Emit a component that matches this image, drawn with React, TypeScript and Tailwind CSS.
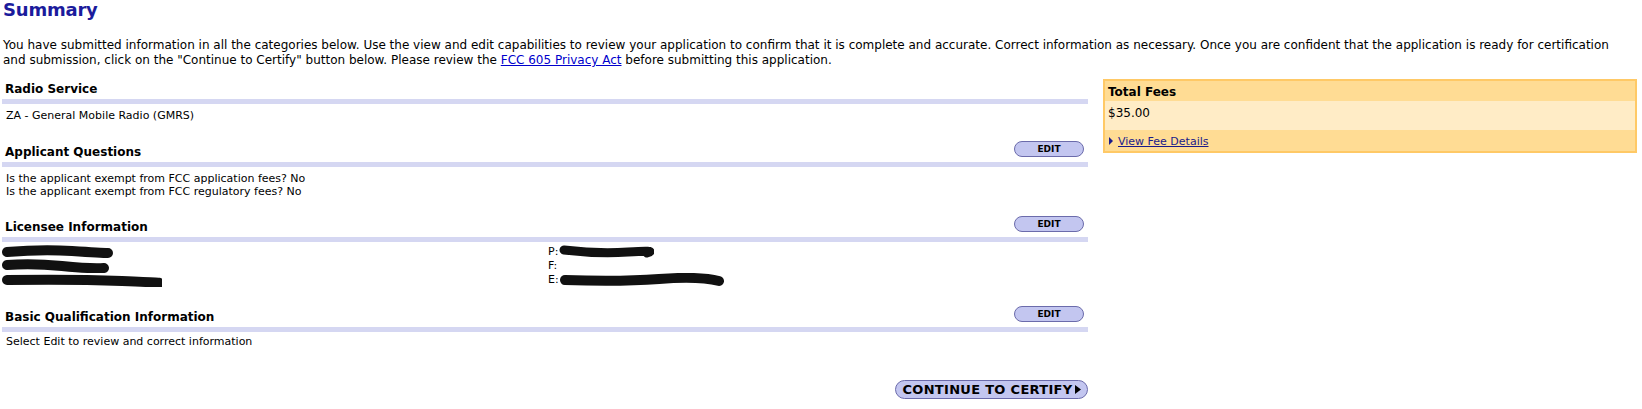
import React from "react";

const Scribble = ({ w, h, d, sw = 9 }: { w: number; h: number; d: string; sw?: number }) => (
  <svg width={w} height={h} viewBox={`0 0 ${w} ${h}`} className="block shrink-0">
    <path d={d} fill="none" stroke="#111" strokeWidth={sw} strokeLinecap="round" strokeLinejoin="round" />
  </svg>
);

const EditBtn = () => (
  <button className="mb-[5px] mr-[4px] flex h-[16px] w-[70px] items-center justify-center rounded-full border border-[#6b6bab] bg-[#c3c6f0] text-[9px] font-bold leading-none text-black">
    EDIT
  </button>
);

const Section = ({
  title,
  edit,
  children,
  className = "",
}: {
  title: string;
  edit?: boolean;
  children: React.ReactNode;
  className?: string;
}) => (
  <div className={className}>
    <div className="flex items-end justify-between">
      <div className="mb-[2px] pl-[3px] text-[12px] font-bold leading-[16px] text-black">{title}</div>
      {edit && <EditBtn />}
    </div>
    <div className="h-[5px] bg-[#d5d7f2]" />
    {children}
  </div>
);

export default function App() {
  return (
    <div className="h-[409px] w-[1642px] overflow-hidden bg-white pl-[2px] font-['DejaVu_Sans',Verdana,sans-serif] text-black">
      <h1 className="pl-[1px] text-[18px] font-bold leading-[20px] tracking-[-0.2px] text-[#1b1b9c]">Summary</h1>
      <div className="mt-[18px] pl-[1px] text-[12px] leading-[15px]">
        <span className="block whitespace-nowrap">
          You have submitted information in all the categories below. Use the view and edit capabilities to review your
          application to confirm that it is complete and accurate. Correct information as necessary. Once you are
          confident that the application is ready for certification
        </span>
        <span className="block whitespace-nowrap">
          and submission, click on the "Continue to Certify" button below. Please review the{" "}
          <a href="#" className="text-[#0000cc] underline">
            FCC 605 Privacy Act
          </a>{" "}
          before submitting this application.
        </span>
      </div>

      <div className="mt-[12px] flex items-start">
        <div className="w-[1086px] pt-[1px]">
          <Section title="Radio Service">
            <div className="pl-[4px] pt-[4px] text-[11px] leading-[15px]">ZA - General Mobile Radio (GMRS)</div>
          </Section>

          <Section title="Applicant Questions" edit className="mt-[18px]">
            <div className="pl-[4px] pt-[5px] text-[11px] leading-[13px]">
              <div>Is the applicant exempt from FCC application fees? No</div>
              <div>Is the applicant exempt from FCC regulatory fees? No</div>
            </div>
          </Section>

          <Section title="Licensee Information" edit className="mt-[18px]">
            <div className="flex pt-[3px] text-[11px] leading-[14px]">
              <div className="w-[546px]">
                <div className="flex h-[14px] items-center">
                  <Scribble w={112} h={14} d="M5 7 Q 40 4 70 6 T 106 8" sw={10} />
                </div>
                <div className="flex h-[14px] items-center">
                  <Scribble w={110} h={14} d="M5 6 Q 30 4 60 7 T 102 9" sw={10} />
                </div>
                <div className="flex h-[14px] items-center">
                  <Scribble w={160} h={14} d="M5 7 Q 70 6 120 8 T 153 10" sw={10} />
                </div>
              </div>
              <div>
                <div className="flex h-[14px] items-center">
                  <span>P:</span>
                  <Scribble w={96} h={14} d="M6 5 Q 40 9 70 7 T 89 8" sw={9} />
                </div>
                <div className="flex h-[14px] items-center">
                  <span>F:</span>
                </div>
                <div className="flex h-[14px] items-center">
                  <span>E:</span>
                  <Scribble w={166} h={14} d="M6 7 Q 60 9 100 6 T 160 8" sw={10} />
                </div>
              </div>
            </div>
          </Section>

          <Section title="Basic Qualification Information" edit className="mt-[19px]">
            <div className="pl-[4px] pt-[2px] text-[11px] leading-[15px]">Select Edit to review and correct information</div>
          </Section>

          <div className="mt-[31px] flex justify-end">
            <button className="flex h-[19px] w-[193px] items-center justify-center gap-[2px] rounded-full border border-[#6b6bab] bg-[#c3c6f0] text-[13px] font-bold leading-none tracking-[0.3px] text-black">
              <span>CONTINUE TO CERTIFY</span>
              <svg width="6" height="9" viewBox="0 0 6 9" className="block">
                <path d="M0 0 L6 4.5 L0 9 Z" fill="#000" />
              </svg>
            </button>
          </div>
        </div>

        <div className="ml-[15px] mt-[-1px] w-[534px] border-2 border-[#ffc966]">
          <div className="flex h-[20px] items-center bg-[#ffdc94] px-[3px] pt-[2px] text-[12px] font-bold">Total Fees</div>
          <div className="h-[29px] bg-[#ffecc6] px-[3px] pt-[5px] text-[12px] leading-[15px]">$35.00</div>
          <div className="flex h-[21px] items-center gap-[5px] bg-[#ffdc94] px-[4px] pt-[1px]">
            <svg width="4" height="8" viewBox="0 0 4 8" className="block">
              <path d="M0 0 L4 4 L0 8 Z" fill="#1a1a8a" />
            </svg>
            <a href="#" className="text-[11px] leading-[13px] text-[#1a1a8a] underline">
              View Fee Details
            </a>
          </div>
        </div>
      </div>
    </div>
  );
}
